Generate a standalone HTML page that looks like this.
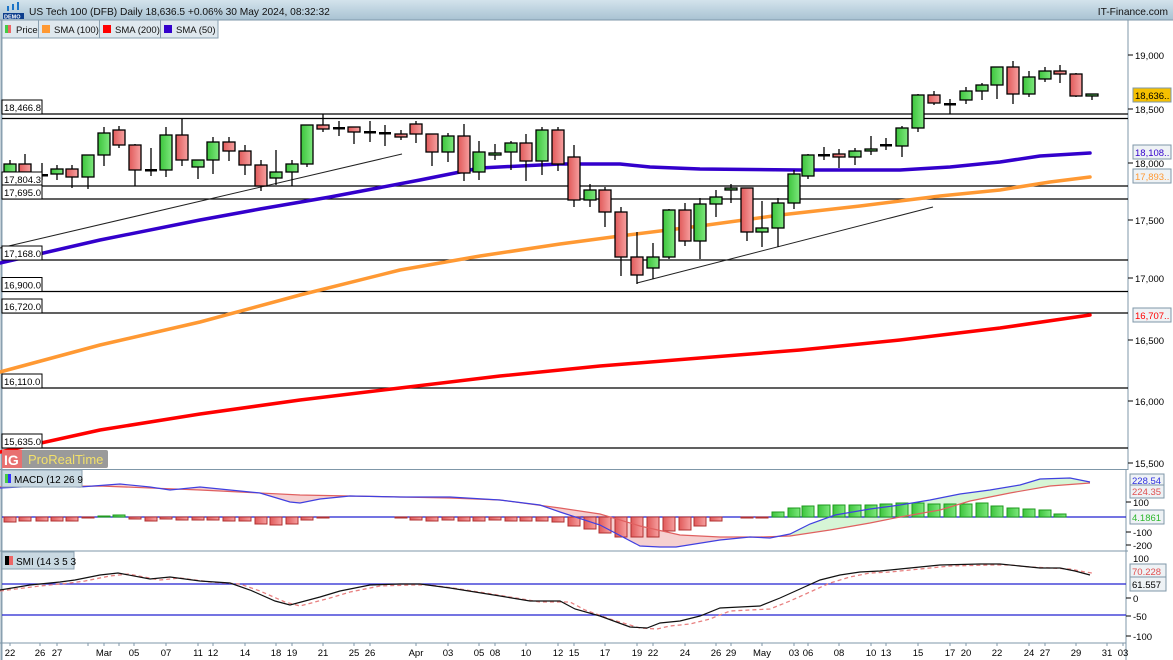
<!DOCTYPE html>
<html><head><meta charset="utf-8"><style>
html,body{margin:0;padding:0;background:#fff;width:1173px;height:660px;overflow:hidden}
svg{display:block;font-family:"Liberation Sans",sans-serif}
.g{fill:url(#gG);stroke:#000;stroke-width:1.3}
.r{fill:url(#gR);stroke:#000;stroke-width:1.3}
.d{fill:#000}
.hr{fill:url(#gR);stroke:#b03030;stroke-width:1}
.hg{fill:url(#gG);stroke:#1e9a1e;stroke-width:1}
.lb{fill:#fff;stroke:#000;stroke-width:1}
</style></head><body>
<svg width="1173" height="660" viewBox="0 0 1173 660" xmlns="http://www.w3.org/2000/svg">
<defs>
<linearGradient id="hdr" x1="0" y1="0" x2="0" y2="1"><stop offset="0" stop-color="#d3e3ec"/><stop offset="1" stop-color="#a8c2d2"/></linearGradient>
<linearGradient id="gG" x1="0" y1="0" x2="1" y2="0"><stop offset="0" stop-color="#3cc43c"/><stop offset="1" stop-color="#7ee87e"/></linearGradient>
<linearGradient id="gR" x1="0" y1="0" x2="1" y2="0"><stop offset="0" stop-color="#e05a5a"/><stop offset="1" stop-color="#f7a0a0"/></linearGradient>
</defs>
<rect width="1173" height="660" fill="#fff"/>
<rect x="0" y="0" width="1173" height="20" fill="url(#hdr)"/>
<line x1="0" y1="20" x2="1173" y2="20" stroke="#7f97a8"/>
<g fill="#1a73c7"><rect x="3" y="13" width="21" height="6" fill="#0b3d8c"/><rect x="7" y="6" width="2" height="5"/><rect x="12" y="4" width="2" height="6"/><rect x="17" y="2" width="2" height="8"/></g>
<text x="4" y="18.5" font-size="5.5" fill="#fff" font-weight="bold">DEMO</text>
<text x="29" y="15" font-size="10.2" fill="#111">US Tech 100 (DFB) Daily 18,636.5 +0.06% 30 May 2024, 08:32:32</text>
<text x="1168" y="15" font-size="10.2" fill="#111" text-anchor="end">IT-Finance.com</text>
<g font-size="9.5" fill="#111">
<rect x="2" y="20" width="216" height="18" fill="#dfe8ee" stroke="#8aa0b0"/>
<line x1="38.5" y1="20" x2="38.5" y2="38" stroke="#8aa0b0"/><line x1="99.5" y1="20" x2="99.5" y2="38" stroke="#8aa0b0"/><line x1="160.5" y1="20" x2="160.5" y2="38" stroke="#8aa0b0"/>
<rect x="5" y="25" width="3" height="8" fill="#4c4"/><rect x="8" y="25" width="3" height="8" fill="#e66"/>
<text x="16" y="33">Price</text>
<rect x="42" y="25" width="8" height="8" fill="#f93"/><text x="54" y="33">SMA (100)</text>
<rect x="103" y="25" width="8" height="8" fill="#f00"/><text x="115" y="33">SMA (200)</text>
<rect x="164" y="25" width="8" height="8" fill="#3300cc"/><text x="176" y="33">SMA (50)</text>
</g>
<line x1="1.5" y1="20" x2="1.5" y2="660" stroke="#8aa0b0" stroke-width="2"/>
<line x1="1128" y1="20" x2="1128" y2="470" stroke="#7f97a8"/>
<line x1="1126" y1="470" x2="1126" y2="660" stroke="#7f97a8"/>
<line x1="0" y1="469.5" x2="1128" y2="469.5" stroke="#7f97a8"/>
<line x1="0" y1="551" x2="1128" y2="551" stroke="#7f97a8"/>
<line x1="0" y1="643" x2="1126" y2="643" stroke="#7f97a8"/>
<g stroke="#000" stroke-width="1.2">
<line x1="2" y1="114" x2="1128" y2="114"/><line x1="2" y1="118.5" x2="1128" y2="118.5"/>
<line x1="2" y1="186" x2="1128" y2="186"/><line x1="2" y1="199" x2="1128" y2="199"/>
<line x1="2" y1="260" x2="1128" y2="260"/><line x1="2" y1="291.5" x2="1128" y2="291.5"/>
<line x1="2" y1="313" x2="1128" y2="313"/><line x1="2" y1="388" x2="1128" y2="388"/>
<line x1="2" y1="448" x2="1128" y2="448"/>
</g>
<g stroke="#222" stroke-width="1"><line x1="0" y1="248" x2="402" y2="154"/><line x1="637" y1="283" x2="933" y2="207"/></g>
<g fill="none" stroke-linejoin="round" stroke-linecap="round">
<polyline stroke="#f00" stroke-width="3.5" points="0,452 100,430 200,414 300,400 400,388 500,376 600,366 700,358 800,350 900,340 1000,328 1090,315"/>
<polyline stroke="#ff9933" stroke-width="3.5" points="0,372 100,345 200,322 300,295 400,270 480,256 560,244 620,236 700,226 780,215 860,206 940,196 1000,190 1050,182 1090,177"/>
<polyline stroke="#3300cc" stroke-width="3.5" points="0,263 100,240 200,220 260,209 330,197 420,180 480,168 560,164 620,164 650,167 700,169 800,170 900,170 950,167 1000,162 1040,156 1090,153"/>
</g>
<path stroke="#000" stroke-width="1.3" fill="none" d="M10 160V176M25 154V178M42 163V180M57 165V180M72 165V188M88 155V189M104 127V166M119 126V148M135 144V186M151 148V176M166 127V177M182 119V166M198 160V179M213 137V174M229 137V161M245 145V175M261 160V191M276 150V185M292 160V186M307 125V167M323 114V132M339 121V136M354 127V144M370 121V142M385 125V146M401 130V140M416 121V143M432 134V166M448 133V162M464 124V181M479 141V180M495 144V160M511 141V170M526 134V181M542 127V175M558 127V171M574 145V207M590 184V207M605 187V227M621 207V276M637 232V284M653 243V279M669 209V259M685 203V246M700 198V259M716 190V217M731 184V203M747 188V241M762 201V247M778 198V247M794 170V209M808 154V179M824 147V160M839 149V168M855 148V165M871 136V155M886 138V150M902 126V157M918 94V132M934 91V105M950 99V114M966 87V104M982 83V100M997 67V99M1013 61V104M1029 71V97M1045 67V82M1060 65V83M1076 73V97M1092 94V100"/>
<g>
<rect class="g" x="4" y="164" width="12" height="8"/><rect class="r" x="19" y="164" width="12" height="8"/><rect class="d" x="36" y="174" width="12" height="2.5"/><rect class="g" x="51" y="169" width="12" height="5"/><rect class="r" x="66" y="169" width="12" height="8"/><rect class="g" x="82" y="155" width="12" height="22"/><rect class="g" x="98" y="133" width="12" height="22"/><rect class="r" x="113" y="130" width="12" height="15"/><rect class="r" x="129" y="145" width="12" height="25"/><rect class="d" x="145" y="169" width="12" height="2.5"/><rect class="g" x="160" y="135" width="12" height="35"/><rect class="r" x="176" y="135" width="12" height="25"/><rect class="g" x="192" y="160" width="12" height="7"/><rect class="g" x="207" y="142" width="12" height="18"/><rect class="r" x="223" y="142" width="12" height="9"/><rect class="r" x="239" y="151" width="12" height="14"/><rect class="r" x="255" y="165" width="12" height="21"/><rect class="g" x="270" y="172" width="12" height="6"/><rect class="g" x="286" y="164" width="12" height="8"/><rect class="g" x="301" y="125" width="12" height="39"/><rect class="r" x="317" y="125" width="12" height="4"/><rect class="d" x="333" y="127" width="12" height="2.5"/><rect class="r" x="348" y="127" width="12" height="5"/><rect class="d" x="364" y="131" width="12" height="2.5"/><rect class="d" x="379" y="132" width="12" height="2.5"/><rect class="r" x="395" y="134" width="12" height="3"/><rect class="r" x="410" y="124" width="12" height="10"/><rect class="r" x="426" y="134" width="12" height="18"/><rect class="g" x="442" y="136" width="12" height="16"/><rect class="r" x="458" y="136" width="12" height="37"/><rect class="g" x="473" y="152" width="12" height="20"/><rect class="g" x="489" y="153" width="12" height="2"/><rect class="g" x="505" y="143" width="12" height="9"/><rect class="r" x="520" y="143" width="12" height="18"/><rect class="g" x="536" y="130" width="12" height="31"/><rect class="r" x="552" y="130" width="12" height="34"/><rect class="r" x="568" y="157" width="12" height="43"/><rect class="g" x="584" y="190" width="12" height="10"/><rect class="r" x="599" y="190" width="12" height="22"/><rect class="r" x="615" y="212" width="12" height="45"/><rect class="r" x="631" y="257" width="12" height="18"/><rect class="g" x="647" y="257" width="12" height="11"/><rect class="g" x="663" y="210" width="12" height="47"/><rect class="r" x="679" y="210" width="12" height="31"/><rect class="g" x="694" y="204" width="12" height="37"/><rect class="g" x="710" y="197" width="12" height="7"/><rect class="g" x="725" y="188" width="12" height="2"/><rect class="r" x="741" y="188" width="12" height="44"/><rect class="g" x="756" y="228" width="12" height="4"/><rect class="g" x="772" y="203" width="12" height="25"/><rect class="g" x="788" y="174" width="12" height="29"/><rect class="g" x="802" y="155" width="12" height="21"/><rect class="d" x="818" y="154" width="12" height="2.5"/><rect class="r" x="833" y="154" width="12" height="3"/><rect class="g" x="849" y="151" width="12" height="6"/><rect class="g" x="865" y="149" width="12" height="2"/><rect class="d" x="880" y="144" width="12" height="2.5"/><rect class="g" x="896" y="128" width="12" height="18"/><rect class="g" x="912" y="95" width="12" height="33"/><rect class="r" x="928" y="95" width="12" height="8"/><rect class="d" x="944" y="103" width="12" height="2.5"/><rect class="g" x="960" y="91" width="12" height="9"/><rect class="g" x="976" y="85" width="12" height="6"/><rect class="g" x="991" y="67" width="12" height="18"/><rect class="r" x="1007" y="67" width="12" height="27"/><rect class="g" x="1023" y="77" width="12" height="17"/><rect class="g" x="1039" y="71" width="12" height="8"/><rect class="r" x="1054" y="71" width="12" height="3"/><rect class="r" x="1070" y="74" width="12" height="22"/><rect class="g" x="1086" y="94" width="12" height="2"/>
</g>
<g font-size="9.5" fill="#000">
<rect class="lb" x="2" y="100" width="40" height="14"/><text x="4" y="111">18,466.8</text>
<rect class="lb" x="2" y="172" width="40" height="14"/><text x="4" y="183">17,804.3</text>
<rect class="lb" x="2" y="185" width="40" height="14"/><text x="4" y="196">17,695.0</text>
<rect class="lb" x="2" y="246" width="40" height="14"/><text x="4" y="257">17,168.0</text>
<rect class="lb" x="2" y="277.5" width="40" height="14"/><text x="4" y="288.5">16,900.0</text>
<rect class="lb" x="2" y="299" width="40" height="14"/><text x="4" y="310">16,720.0</text>
<rect class="lb" x="2" y="374" width="40" height="14"/><text x="4" y="385">16,110.0</text>
<rect class="lb" x="2" y="434" width="40" height="14"/><text x="4" y="445">15,635.0</text>
</g>
<rect x="2" y="450" width="106" height="18" rx="2" fill="#9a9a9a"/>
<rect x="2" y="450" width="20" height="18" fill="#e87070"/>
<text x="4" y="465" font-size="14" fill="#fff" font-weight="bold">IG</text>
<text x="28" y="464" font-size="13" fill="#f2e06a">ProRealTime</text>
<g font-size="9.5" fill="#000">
<line x1="1128" y1="55" x2="1133" y2="55" stroke="#000"/><text x="1135" y="59">19,000</text>
<line x1="1128" y1="109" x2="1133" y2="109" stroke="#000"/><text x="1135" y="113">18,500</text>
<line x1="1128" y1="163" x2="1133" y2="163" stroke="#000"/><text x="1135" y="167">18,000</text>
<line x1="1128" y1="220" x2="1133" y2="220" stroke="#000"/><text x="1135" y="224">17,500</text>
<line x1="1128" y1="278" x2="1133" y2="278" stroke="#000"/><text x="1135" y="282">17,000</text>
<line x1="1128" y1="340" x2="1133" y2="340" stroke="#000"/><text x="1135" y="344">16,500</text>
<line x1="1128" y1="401" x2="1133" y2="401" stroke="#000"/><text x="1135" y="405">16,000</text>
<line x1="1128" y1="463" x2="1133" y2="463" stroke="#000"/><text x="1135" y="467">15,500</text>
<rect x="1133" y="88" width="38" height="14" fill="#f6c000" stroke="#7f97a8"/><text x="1135" y="99">18,636..</text>
<rect x="1133" y="145" width="38" height="14" fill="#eef2f5" stroke="#7f97a8"/><text x="1135" y="156" fill="#3300cc">18,108..</text>
<rect x="1133" y="169" width="38" height="14" fill="#eef2f5" stroke="#7f97a8"/><text x="1135" y="180" fill="#ff9933">17,893..</text>
<rect x="1133" y="308" width="38" height="14" fill="#eef2f5" stroke="#7f97a8"/><text x="1135" y="319" fill="#f00">16,707..</text>
</g>
<polygon fill="#f6d0d0" points="0,488 40,486 80,487 120,484 150,487 170,490 200,487 230,490 260,493 290,502 300,503 320,499 350,496 400,497 450,497 500,500 540,505 560,512 600,525 640,546 660,547 676,547 720,540 750,537 770,538 790,534 790,536 760,537 720,537 680,535 640,526 600,514 560,508 500,500 450,498 400,497 300,495 200,490 100,486 0,487"/>
<polygon fill="#d6f5d6" points="790,534 810,524 835,515 870,509 900,505 930,500 960,494 990,490 1020,485 1040,479 1070,478 1090,482 1090,483 1050,486 1010,493 970,501 940,510 900,517 870,523 830,530 790,536"/>
<line x1="2" y1="517" x2="1126" y2="517" stroke="#2020d0" stroke-width="1.2"/>
<g>
<rect class="hr" x="4" y="517" width="12" height="5"/><rect class="hr" x="19" y="517" width="12" height="4"/><rect class="hr" x="36" y="517" width="12" height="4"/><rect class="hr" x="51" y="517" width="12" height="4"/><rect class="hr" x="66" y="517" width="12" height="4"/><rect class="hr" x="82" y="517" width="12" height="1"/>
<rect class="hg" x="98" y="516" width="12" height="1"/><rect class="hg" x="113" y="515" width="12" height="2"/>
<rect class="hr" x="129" y="517" width="12" height="2"/><rect class="hr" x="145" y="517" width="12" height="4"/><rect class="hr" x="160" y="517" width="12" height="2"/><rect class="hr" x="176" y="517" width="12" height="3"/><rect class="hr" x="192" y="517" width="12" height="3"/><rect class="hr" x="207" y="517" width="12" height="3"/><rect class="hr" x="223" y="517" width="12" height="4"/><rect class="hr" x="239" y="517" width="12" height="4"/><rect class="hr" x="255" y="517" width="12" height="7"/><rect class="hr" x="270" y="517" width="12" height="8"/><rect class="hr" x="286" y="517" width="12" height="7"/><rect class="hr" x="301" y="517" width="12" height="3"/><rect class="hr" x="317" y="517" width="12" height="1"/>
<rect class="hr" x="395" y="517" width="12" height="1"/><rect class="hr" x="410" y="517" width="12" height="3"/><rect class="hr" x="426" y="517" width="12" height="4"/><rect class="hr" x="442" y="517" width="12" height="3"/><rect class="hr" x="458" y="517" width="12" height="4"/><rect class="hr" x="473" y="517" width="12" height="4"/><rect class="hr" x="489" y="517" width="12" height="3"/><rect class="hr" x="505" y="517" width="12" height="4"/><rect class="hr" x="520" y="517" width="12" height="4"/><rect class="hr" x="536" y="517" width="12" height="4"/><rect class="hr" x="552" y="517" width="12" height="5"/>
<rect class="hr" x="568" y="517" width="12" height="9"/><rect class="hr" x="584" y="517" width="12" height="12"/><rect class="hr" x="599" y="517" width="12" height="16"/><rect class="hr" x="615" y="517" width="12" height="20"/><rect class="hr" x="631" y="517" width="12" height="20"/><rect class="hr" x="647" y="517" width="12" height="20"/><rect class="hr" x="663" y="517" width="12" height="14"/><rect class="hr" x="679" y="517" width="12" height="13"/><rect class="hr" x="694" y="517" width="12" height="9"/><rect class="hr" x="710" y="517" width="12" height="4"/><rect class="hr" x="741" y="517" width="12" height="1"/><rect class="hr" x="756" y="517" width="12" height="1"/>
<rect class="hg" x="772" y="512" width="12" height="5"/><rect class="hg" x="788" y="508" width="12" height="9"/><rect class="hg" x="802" y="506" width="12" height="11"/><rect class="hg" x="818" y="505" width="12" height="12"/><rect class="hg" x="833" y="505" width="12" height="12"/><rect class="hg" x="849" y="505" width="12" height="12"/><rect class="hg" x="865" y="505" width="12" height="12"/><rect class="hg" x="880" y="504" width="12" height="13"/><rect class="hg" x="896" y="503" width="12" height="14"/><rect class="hg" x="912" y="503" width="12" height="14"/><rect class="hg" x="928" y="504" width="12" height="13"/><rect class="hg" x="944" y="504" width="12" height="13"/><rect class="hg" x="960" y="504" width="12" height="13"/><rect class="hg" x="976" y="503" width="12" height="14"/><rect class="hg" x="991" y="506" width="12" height="11"/><rect class="hg" x="1007" y="508" width="12" height="9"/><rect class="hg" x="1023" y="509" width="12" height="8"/><rect class="hg" x="1039" y="510" width="12" height="7"/><rect class="hg" x="1054" y="514" width="12" height="3"/>
</g>
<polyline fill="none" stroke="#e06060" stroke-width="1.2" points="0,487 100,486 200,490 300,495 400,497 450,498 500,500 560,508 600,514 640,526 680,535 720,537 760,537 790,536 830,530 870,523 900,517 940,510 970,501 1010,493 1050,486 1090,483"/>
<polyline fill="none" stroke="#4040e0" stroke-width="1.2" points="0,488 40,486 80,487 120,484 150,487 170,490 200,487 230,490 260,493 290,502 300,503 320,499 350,496 400,497 450,497 500,500 540,505 560,512 600,525 640,546 660,547 676,547 720,540 750,537 770,538 790,534 810,524 835,515 870,509 900,505 930,500 960,494 990,490 1020,485 1040,479 1070,478 1090,482"/>
<rect x="2" y="470" width="80" height="17" fill="#c9d9e2" stroke="#8aa0b0"/>
<rect x="5" y="474" width="3" height="9" fill="#4c4"/><rect x="8" y="474" width="3" height="9" fill="#33f"/>
<text x="14" y="483" font-size="10">MACD (12 26 9</text>
<g font-size="9.5" fill="#000">
<rect x="1130" y="474" width="34" height="13" fill="#eef2f5" stroke="#7f97a8"/><text x="1132" y="484" fill="#3030e0">228.54</text>
<rect x="1130" y="485" width="34" height="13" fill="#eef2f5" stroke="#7f97a8"/><text x="1132" y="495" fill="#e05050">224.35</text>
<line x1="1126" y1="502" x2="1131" y2="502" stroke="#000"/><text x="1133" y="506">100</text>
<rect x="1130" y="510" width="34" height="14" fill="#eef2f5" stroke="#7f97a8"/><text x="1132" y="521" fill="#2db82d">4.1861</text>
<line x1="1126" y1="532" x2="1131" y2="532" stroke="#000"/><text x="1133" y="536">-100</text>
<line x1="1126" y1="545" x2="1131" y2="545" stroke="#000"/><text x="1133" y="549">-200</text>
</g>
<line x1="2" y1="584" x2="1126" y2="584" stroke="#2020d0" stroke-width="1.2"/>
<line x1="2" y1="615" x2="1126" y2="615" stroke="#2020d0" stroke-width="1.2"/>
<polyline fill="none" stroke="#e88080" stroke-width="1.3" stroke-dasharray="4,3" points="0,591 40,586 70,583 85,581 110,576 128,574 160,580 180,578 210,582 240,584 260,591 285,602 300,606 330,598 350,592 380,586 410,585 430,585 460,589 510,597 540,602 570,602 585,610 610,619 640,628 657,629 670,626 690,624 710,619 730,611 750,610 770,609 790,601 810,592 830,583 850,577 870,573 890,572 910,570 930,568 950,566 990,565 1010,565 1030,567 1050,568 1070,569 1085,572 1092,573"/>
<polyline fill="none" stroke="#111" stroke-width="1.2" points="0,590 30,585 60,582 75,580 100,575 118,573 150,579 170,577 200,581 230,583 250,590 275,601 290,605 320,597 340,591 370,585 400,584 420,584 450,588 500,596 530,601 560,601 575,609 600,616 630,627 647,628 660,623 680,621 700,616 720,608 740,607 760,606 780,598 800,589 820,580 840,575 860,572 880,571 900,569 920,567 940,565 980,564 1000,564 1020,566 1040,568 1060,568 1075,571 1090,575"/>
<rect x="2" y="552" width="72" height="17" fill="#c9d9e2" stroke="#8aa0b0"/>
<rect x="5" y="556" width="4" height="9" fill="#000"/><rect x="9" y="556" width="4" height="9" fill="#e66"/>
<text x="16" y="565" font-size="10">SMI (14 3 5 3</text>
<g font-size="9.5" fill="#000">
<text x="1133" y="562">100</text>
<rect x="1130" y="564" width="36" height="14" fill="#eef2f5" stroke="#7f97a8"/><text x="1132" y="575" fill="#e05050">70.228</text>
<rect x="1130" y="577" width="36" height="14" fill="#eef2f5" stroke="#7f97a8"/><text x="1132" y="588">61.557</text>
<line x1="1126" y1="598" x2="1131" y2="598" stroke="#000"/><text x="1133" y="602">0</text>
<line x1="1126" y1="616" x2="1131" y2="616" stroke="#000"/><text x="1133" y="620">-50</text>
<line x1="1126" y1="636" x2="1131" y2="636" stroke="#000"/><text x="1133" y="640">-100</text>
</g>
<path stroke="#7f97a8" d="M10 643v3M40 643v3M57 643v3M88 643v3M104 643v3M119 643v3M134 643v3M166 643v3M198 643v3M213 643v3M245 643v3M276 643v3M292 643v3M323 643v3M354 643v3M370 643v3M416 643v3M448 643v3M479 643v3M495 643v3M526 643v3M558 643v3M574 643v3M605 643v3M637 643v3M653 643v3M685 643v3M716 643v3M731 643v3M762 643v3M794 643v3M808 643v3M839 643v3M871 643v3M886 643v3M918 643v3M950 643v3M966 643v3M997 643v3M1029 643v3M1045 643v3M1076 643v3M1107 643v3M1123 643v3"/>
<g font-size="9.5" fill="#000" text-anchor="middle">
<text x="10" y="656">22</text><text x="40" y="656">26</text><text x="57" y="656">27</text><text x="104" y="656">Mar</text><text x="134" y="656">05</text><text x="166" y="656">07</text><text x="198" y="656">11</text><text x="213" y="656">12</text><text x="245" y="656">14</text><text x="276" y="656">18</text><text x="292" y="656">19</text><text x="323" y="656">21</text><text x="354" y="656">25</text><text x="370" y="656">26</text><text x="416" y="656">Apr</text><text x="448" y="656">03</text><text x="479" y="656">05</text><text x="495" y="656">08</text><text x="526" y="656">10</text><text x="558" y="656">12</text><text x="574" y="656">15</text><text x="605" y="656">17</text><text x="637" y="656">19</text><text x="653" y="656">22</text><text x="685" y="656">24</text><text x="716" y="656">26</text><text x="731" y="656">29</text><text x="762" y="656">May</text><text x="794" y="656">03</text><text x="808" y="656">06</text><text x="839" y="656">08</text><text x="871" y="656">10</text><text x="886" y="656">13</text><text x="918" y="656">15</text><text x="950" y="656">17</text><text x="966" y="656">20</text><text x="997" y="656">22</text><text x="1029" y="656">24</text><text x="1045" y="656">27</text><text x="1076" y="656">29</text><text x="1107" y="656">31</text><text x="1123" y="656">03</text>
</g>
</svg>
</body></html>
